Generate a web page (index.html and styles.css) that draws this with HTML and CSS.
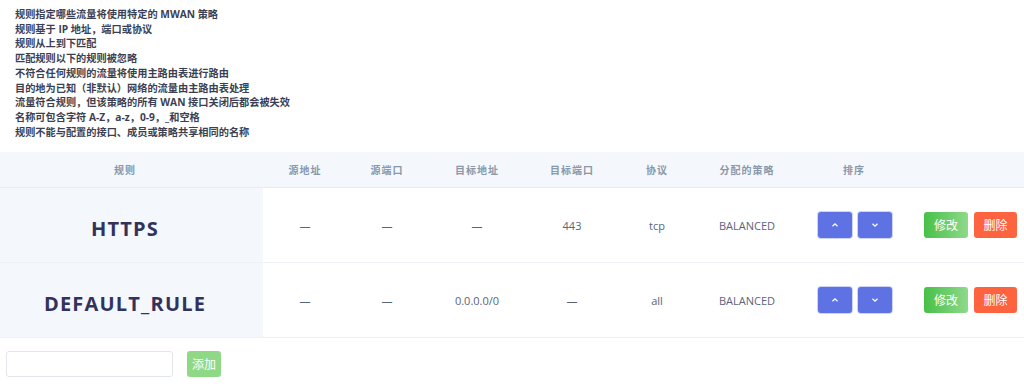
FILE: index.html
```html
<!DOCTYPE html>
<html lang="zh-CN">
<head>
<meta charset="utf-8">
<title>MWAN 规则</title>
<link rel="stylesheet" href="styles.css">
</head>
<body>
<div class="desc">
  <div>规则指定哪些流量将使用特定的 MWAN 策略</div>
  <div>规则基于 IP 地址，端口或协议</div>
  <div>规则从上到下匹配</div>
  <div>匹配规则以下的规则被忽略</div>
  <div>不符合任何规则的流量将使用主路由表进行路由</div>
  <div>目的地为已知（非默认）网络的流量由主路由表处理</div>
  <div>流量符合规则，但该策略的所有 WAN 接口关闭后都会被失效</div>
  <div>名称可包含字符 A-Z，a-z，0-9，_和空格</div>
  <div>规则不能与配置的接口、成员或策略共享相同的名称</div>
</div>

<div class="table">
  <div class="row head">
    <div class="cell c1">规则</div>
    <div class="cell">源地址</div>
    <div class="cell">源端口</div>
    <div class="cell">目标地址</div>
    <div class="cell">目标端口</div>
    <div class="cell">协议</div>
    <div class="cell">分配的策略</div>
    <div class="cell">排序</div>
    <div class="cell"></div>
  </div>
  <div class="row body">
    <div class="cell c1 name">HTTPS</div>
    <div class="cell">—</div>
    <div class="cell">—</div>
    <div class="cell">—</div>
    <div class="cell">443</div>
    <div class="cell">tcp</div>
    <div class="cell">BALANCED</div>
    <div class="cell sort">
      <button class="btn move" aria-label="上移"><svg width="8" height="6" viewBox="0 0 8 6"><path d="M1.5 4.2 L4 1.8 L6.5 4.2" fill="none" stroke="#fff" stroke-width="1.3"/></svg></button>
      <button class="btn move" aria-label="下移"><svg width="8" height="6" viewBox="0 0 8 6"><path d="M1.5 1.8 L4 4.2 L6.5 1.8" fill="none" stroke="#fff" stroke-width="1.3"/></svg></button>
    </div>
    <div class="cell acts">
      <button class="btn edit">修改</button>
      <button class="btn del">删除</button>
    </div>
  </div>
  <div class="row body">
    <div class="cell c1 name">DEFAULT_RULE</div>
    <div class="cell">—</div>
    <div class="cell">—</div>
    <div class="cell">0.0.0.0/0</div>
    <div class="cell">—</div>
    <div class="cell">all</div>
    <div class="cell">BALANCED</div>
    <div class="cell sort">
      <button class="btn move" aria-label="上移"><svg width="8" height="6" viewBox="0 0 8 6"><path d="M1.5 4.2 L4 1.8 L6.5 4.2" fill="none" stroke="#fff" stroke-width="1.3"/></svg></button>
      <button class="btn move" aria-label="下移"><svg width="8" height="6" viewBox="0 0 8 6"><path d="M1.5 1.8 L4 4.2 L6.5 1.8" fill="none" stroke="#fff" stroke-width="1.3"/></svg></button>
    </div>
    <div class="cell acts">
      <button class="btn edit">修改</button>
      <button class="btn del">删除</button>
    </div>
  </div>
</div>

<div class="add">
  <input class="add-input" type="text">
  <button class="btn addbtn">添加</button>
</div>
</body>
</html>
```

FILE: styles.css
```css
html, body {
  margin: 0;
  padding: 0;
  background: #fff;
}
body {
  font-family: "Open Sans", "Noto Sans CJK SC", sans-serif;
  color: #525f7f;
}
.desc {
  padding: 7px 15px 0 15px;
  height: 145px;
  box-sizing: border-box;
  font-size: 10.2px;
  line-height: 14.7px;
  font-weight: 700;
  color: #3c3f52;
}
.table {
  display: flex;
  flex-direction: column;
}
.row {
  display: grid;
  grid-template-columns: 263px 84px 80px 100px 90px 80px 100px 114px 1fr;
  align-items: stretch;
}
.cell {
  display: flex;
  align-items: center;
  justify-content: center;
  font-size: 11px;
}
.head {
  margin-top: 7px;
  height: 36px;
  background: #f4f7fb;
  border-bottom: 1px solid #e9ecef;
  box-sizing: border-box;
}
.head .cell {
  font-size: 10px;
  letter-spacing: 1px;
  color: #8898aa;
  font-weight: 600;
}
.c1 {
  padding-right: 13px;
}
.body {
  height: 75px;
  border-bottom: 1px solid #eef1f5;
  box-sizing: border-box;
}
.body .cell {
  color: #5a647e;
}
.body .c1 {
  background: #f4f7fb;
}
.name {
  font-size: 20px;
  font-weight: 700;
  letter-spacing: 1.2px;
  color: #32325d !important;
  padding-top: 6px;
}
.btn {
  border: 0;
  border-radius: 3px;
  height: 26px;
  padding: 0;
  margin: 0;
  font-family: "Open Sans", "Noto Sans CJK SC", sans-serif;
  font-size: 12px;
  color: #fff;
  display: flex;
  align-items: center;
  justify-content: center;
}
.sort {
  gap: 6px;
  justify-content: flex-start;
  padding-left: 21px;
}
.move {
  width: 34px;
  background: #5e72e4;
  box-shadow: 0 0 0 1px rgba(94,114,228,0.3);
}
.acts {
  gap: 6px;
  justify-content: flex-start;
  padding-left: 13px;
}
.edit {
  width: 44px;
  background: linear-gradient(to right, #47c047, #8fd98b);
}
.del {
  width: 43px;
  background: #fe6340;
}
.add {
  display: flex;
  align-items: center;
  gap: 14px;
  padding: 13px 0 0 6px;
}
.add-input {
  width: 167px;
  height: 26px;
  box-sizing: border-box;
  border: 1px solid #e3e6ea;
  border-radius: 3px;
  margin: 0;
  padding: 0 6px;
  background: #fff;
}
.addbtn {
  width: 34px;
  background: #8fd886;
}
```
